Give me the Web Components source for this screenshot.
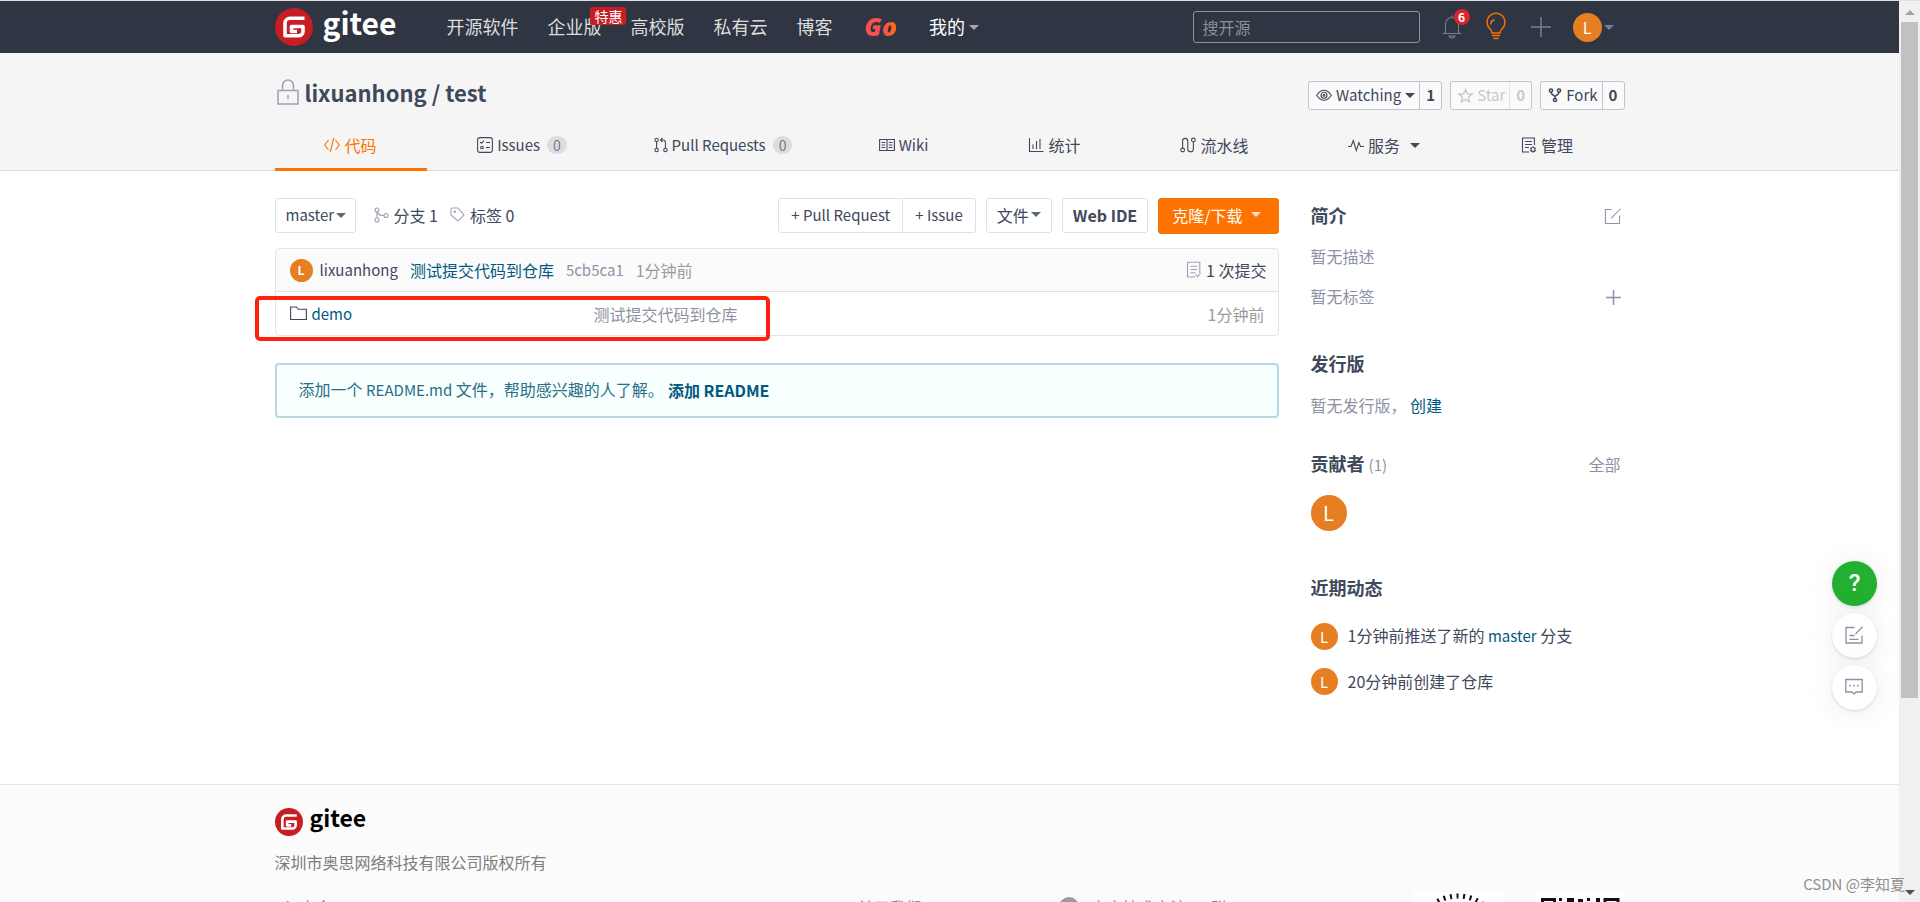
<!DOCTYPE html>
<html lang="zh-CN">
<head>
<meta charset="utf-8">
<title>lixuanhong/test</title>
<style>
html, body { height: 100%; }
body { margin: 0; overflow: hidden; background: #fff; color: #40485b;
  font: 16px/24px "Noto Sans CJK SC", "Noto Sans", sans-serif; }
</style>
</head>
<body>
<gitee-app></gitee-app>
<script>
const define = (name, css, html) => {
  const tpl = document.createElement('template');
  tpl.innerHTML = `<style>*{box-sizing:border-box}:host{box-sizing:border-box}a{color:inherit;text-decoration:none}button,select,input{font:inherit;color:inherit;margin:0;cursor:pointer}h1,h2,p,ul{margin:0;padding:0;list-style:none}.en{font-size:15px}${css}</style>${typeof html === 'string' ? html : ''}`;
  customElements.define(name, class extends HTMLElement {
    constructor() {
      super();
      this.attachShadow({ mode: 'open' }).append(tpl.content.cloneNode(true));
    }
    connectedCallback() {
      if (typeof html === 'function' && !this.ready) {
        this.ready = true;
        this.shadowRoot.append(document.createRange().createContextualFragment(html(this)));
      }
    }
  });
};

const ICONS = {
  lock: ['0 0 22 26', '<path d="M1 11.500h20v13.500H1zM5.500 11.500V6.500a5.500 5.500 0 0 1 11 0v5M11 16v4"/>'],
  code: ['0 0 16 16', '<path d="M4.500 3 .7 8l3.800 5M11.500 3l3.800 5-3.800 5M9.700 1 6.300 15"/>'],
  issues: ['0 0 16 16', '<rect x=".6" y=".6" width="14.800" height="14.800" rx="2.500"/><path d="M3.200 5l1.400 1.300L7 3.600M9 5.500h4M9 10.500h4"/><circle cx="5" cy="10.500" r="1.300"/>'],
  pr: ['0 0 14 16', '<circle cx="2.600" cy="3" r="1.700"/><circle cx="2.600" cy="13" r="1.700"/><circle cx="11.400" cy="13" r="1.700"/><path d="M2.600 4.700v6.600M11.400 11.300V5.500q0-2.500-2.400-2.500H6.500M8.500 1l-2 2 2 2"/>'],
  wiki: ['0 0 16 16', '<path d="M.6 2.500h14.800v11H.6zM8 2.500v11M2.500 5.500h3.700M2.500 8h3.700M2.500 10.500h3.700M9.800 5.500h3.700M9.800 8h3.700M9.800 10.500h3.700"/>'],
  chart: ['0 0 16 16', '<path d="M1.500 1v13.500H15.500M5 12V7.500M8.500 12V4M12 12V2"/>'],
  pipe: ['0 0 16 16', '<circle cx="2.600" cy="13" r="1.900"/><circle cx="13.400" cy="3" r="1.900"/><path d="M2.600 11V4a2.600 2.600 0 0 1 5.200 0v8a2.800 2.800 0 0 0 5.600 0V5"/>'],
  pulse: ['0 0 16 16', '<path d="M0 9.500h3l2.300-6 3 10 2.600-8 1.600 4H16"/>'],
  manage: ['0 0 16 16', '<path d="M13.400 8V1H1.500v14H8M4 4.500h7M4 7.500h7M4 10.500h4"/><circle cx="12" cy="12.500" r="2"/><path d="M12 9.300v1.200M12 14.500v1.200M9.200 10.900l1 .6M13.800 13.500l1 .6M14.800 10.900l-1 .6M10.200 13.500l-1 .6"/>'],
  eye: ['0 0 16 16', '<path d="M.7 8.200q3.300-5 7.300-5t7.300 5q-3.300 5-7.300 5T.7 8.200z"/><circle cx="8" cy="8.200" r="3"/><circle cx="8" cy="8.200" r="1"/>'],
  star: ['0 0 16 16', '<path d="M8 1.500l2 4.600 5 .4-3.800 3.300 1.200 4.900L8 12.100l-4.400 2.600 1.200-4.900L1 6.500l5-.4z"/>'],
  fork: ['0 0 14 16', '<circle cx="3" cy="3.500" r="1.600"/><circle cx="11" cy="3.500" r="1.600"/><circle cx="7" cy="13" r="1.600"/><path d="M3 5.100q0 1.900 2 2.900l2 1.400 2-1.400q2-1 2-2.900M7 9.400v2"/>'],
  branch: ['0 0 16 16', '<circle cx="4" cy="3" r="2"/><circle cx="4" cy="13" r="2"/><circle cx="13" cy="8.500" r="2"/><path d="M4 5v6M4 5q1 3.500 7 3.500"/>'],
  tag: ['0 0 16 16', '<path d="M1 2l1-1h6.500L15 8.500 8.500 15 1 8.500z"/><circle cx="5" cy="5" r=".8"/>'],
  commits: ['0 0 16 18', '<path d="M9 16H1.500V1.200h12.300V12M4.500 5.200h6.500M4.500 8.500h6.500M4.500 11.800h5M9.500 13.500l2 2.300 3-3.800"/>'],
  folder: ['0 0 17 15', '<path d="M.6 13.500V1H6.500l1.600 2.200h8.300v10.300z"/>'],
  edit: ['0 0 18 18', '<path d="M8 1.500H1.500v15H16.500V8M17.500.8 7.500 11"/>'],
  plus: ['0 0 20 20', '<path d="M10 0v20M0 10h20"/>'],
  bell: ['0 0 20 24', '<path d="M.5 18.500h19M3.500 18.500V9a6.500 6.500 0 0 1 13 0v9.500M10 2.500V.5M7 21h6q-1 2-3 2t-3-2z"/>'],
  bulb: ['0 0 20 25', '<path d="M6 18q0-2.500-2.600-4.700a9 9 0 1 1 13.200 0Q14 15.500 14 18zM6 20.500h8M7.500 23.500h5M4.700 9.500a5 5 0 0 1 3.800-4.700"/>'],
  survey: ['0 0 18 18', '<path d="M9.500 1.500H1v15.500h16V9.500M17.500.8 10.500 8M4.500 9.500h5M4.500 13.300h9"/>'],
  chat: ['0 0 18 18', '<path d="M.8 1.500h16.400v12.500H11l-2 2-2-2H.8z"/><path d="M4.200 7.700h1.600M8.200 7.700h1.600M12.200 7.700h1.600" stroke-width="1.700"/>'],
};
define('g-icon', ':host{display:inline-flex;flex:none}svg{display:block;overflow:visible}',
  el => {
    const [box, body] = ICONS[el.getAttribute('name')];
    const [, , w, h] = box.split(' ').map(Number);
    const width = +(el.getAttribute('size') || w);
    return `<svg width="${width}" height="${Math.round(width * h / w)}" viewBox="${box}" fill="none" stroke="currentColor" stroke-width="${el.getAttribute('stroke') || 1.1}" aria-hidden="true">${body}</svg>`;
  });

define('g-caret', ':host{display:inline-block;flex:none;width:0;height:0;border:5px solid transparent;border-bottom:0;border-top-color:currentColor}', '');

define('user-avatar', `:host{display:inline-flex;flex:none;align-items:center;justify-content:center;width:var(--d,28px);height:var(--d,28px);
  border-radius:50%;background:#e67e22;color:#fff;font-size:var(--f,14px);line-height:1}`, '<slot></slot>');

define('gitee-logo', `:host{display:block}a{display:flex;align-items:center;gap:var(--gap,10px);color:inherit}
  svg{display:block;width:var(--d,38px);height:var(--d,38px)}
  span{font-weight:700;font-size:var(--f,30px);line-height:calc(var(--d,38px) - 10px);padding-bottom:10px}`,
  `<a href="#"><svg viewBox="0 0 38 38" aria-hidden="true"><circle cx="19" cy="19" r="19" fill="#c71d23"/>
  <path d="M29.500 10.200H15a5 5 0 0 0-5 5v12.600H23.500a4.500 4.500 0 0 0 4.500-4.500v-4.800H16.500v5H22" fill="none" stroke="#fff" stroke-width="3.600" stroke-linejoin="round"/></svg><span>gitee</span></a>`);

define('site-header', `:host{display:block;background:#2f3542;color:#dcdcdc;border-top:1px solid #dcdfe3}
  .bar{display:flex;align-items:center;height:52px;max-width:1350px;margin:0 auto}
  gitee-logo{color:#fff}
  nav{display:flex;align-items:center;gap:29px;margin-left:50px;padding-bottom:3px;font-size:18px;line-height:26px}
  .ent{position:relative}
  .hot{position:absolute;left:43px;top:-6px;width:36px;height:18px;border-radius:2px;background:#c71d23;color:#fff;font-size:14px;line-height:18px;text-align:center}
  .go{margin:0 1px 0 3px;padding:0 2px 0 0;font:italic 800 25px/26px "Open Sans",sans-serif;background:linear-gradient(90deg,#f6504f 60%,#ff6a13 85%);-webkit-background-clip:text;background-clip:text;color:transparent}
  .me{display:flex;align-items:center;gap:4px;color:#fff}.me g-caret{color:#a4a8ae;margin-top:4px}
  input{width:227px;height:32px;margin-left:auto;padding:0 9px;border:1px solid #8f939b;border-radius:3px;background:transparent;outline:0;cursor:text}
  input::placeholder{color:#8c9099;opacity:1}
  .tools{display:flex;align-items:center;margin-left:22px;margin-right:11px;color:#74809a}
  .tools button{display:flex;align-items:center;position:relative;padding:0;border:0;background:none}
  .n{position:absolute;left:12px;top:-6px;width:16px;height:16px;border-radius:50%;background:#d9262c;color:#fff;font-size:12px;font-weight:700;line-height:16px;text-align:center}
  .bulb{margin-left:24px;color:#fe7300}.plus{margin-left:25px}.user{margin-left:22px;gap:2px}`,
  `<header class="bar"><gitee-logo></gitee-logo>
  <nav><a href="#">开源软件</a><a href="#" class="ent">企业版<span class="hot">特惠</span></a><a href="#">高校版</a><a href="#">私有云</a><a href="#">博客</a><a href="#" class="go">Go</a><a href="#" class="me">我的<g-caret></g-caret></a></nav>
  <input type="search" placeholder="搜开源" aria-label="搜开源">
  <div class="tools"><button aria-label="通知"><g-icon name="bell"></g-icon><span class="n">6</span></button>
  <button class="bulb" aria-label="提示"><g-icon name="bulb" stroke="1.500"></g-icon></button>
  <button class="plus" aria-label="新建"><g-icon name="plus" stroke="1.500"></g-icon></button>
  <button class="user" aria-label="账户"><user-avatar style="--d:29px;--f:16px">L</user-avatar><g-caret></g-caret></button></div></header>`);

define('count-button', `:host{display:flex;height:29px;border:1px solid #c0c4cc;border-radius:3px;background:#fafafa;color:#40485b;font-size:15px}
  :host([muted]){color:#c9c9c9}
  button,a{display:flex;align-items:center;padding:0 4px 0 7px;gap:4px;border:0;background:none;line-height:26px}
  a{width:22px;padding:0;justify-content:center;border-left:1px solid #c0c4cc;font-weight:700}
  :host([muted]) a{border-color:#e3e3e3}`,
  '<button><slot></slot></button><a href="#"><slot name="count"></slot></a>');

define('repo-tab', `:host{display:block}
  a{display:flex;align-items:center;justify-content:center;gap:4px;height:100%;padding-bottom:8px}
  :host([active]) a{color:#fe7300;border-bottom:3px solid #fe7300;padding-bottom:5px}`, '<a href="#"><slot></slot></a>');

define('repo-header', `:host{display:block;background:#f5f5f5;border-bottom:1px solid #dcdddf}
  .in{max-width:1350px;margin:0 auto}
  .top{display:flex;align-items:center;justify-content:space-between;height:74px;padding-top:4px}
  h1{display:flex;align-items:center;gap:6px;padding-left:2px;font-size:22px;line-height:30px}
  h1 g-icon{color:#9aa3b5}
  .acts{display:flex;gap:8px;padding-top:6px}
  nav{display:grid;grid-template-columns:152fr 191fr 211fr 150fr 152fr 168fr 171fr 155fr;height:44px;margin-bottom:-1px}
  .num{margin-left:3px;padding:0 6px;border-radius:9px;background:#dcddde;color:#6c7a96;font-size:14px;line-height:18px}
  nav g-caret{margin-left:6px}`,
  `<div class="in"><div class="top"><h1><g-icon name="lock" stroke="1.500"></g-icon><a href="#">lixuanhong / test</a></h1>
  <div class="acts">
  <count-button><g-icon name="eye"></g-icon>Watching<g-caret></g-caret><span slot="count">1</span></count-button>
  <count-button muted><g-icon name="star" size="15" stroke="1.500"></g-icon>Star<span slot="count">0</span></count-button>
  <count-button><g-icon name="fork" stroke="1.500"></g-icon>Fork<span slot="count">0</span></count-button></div></div>
  <nav><repo-tab active><g-icon name="code"></g-icon>代码</repo-tab>
  <repo-tab class="en"><g-icon name="issues"></g-icon>Issues<span class="num">0</span></repo-tab>
  <repo-tab class="en"><g-icon name="pr"></g-icon>Pull Requests<span class="num">0</span></repo-tab>
  <repo-tab class="en"><g-icon name="wiki"></g-icon>Wiki</repo-tab>
  <repo-tab><g-icon name="chart"></g-icon>统计</repo-tab>
  <repo-tab><g-icon name="pipe"></g-icon>流水线</repo-tab>
  <repo-tab><g-icon name="pulse"></g-icon>服务<g-caret></g-caret></repo-tab>
  <repo-tab><g-icon name="manage"></g-icon>管理</repo-tab></nav></div>`);

define('repo-toolbar', `:host{display:flex;align-items:flex-start;height:36px}
  button,.sel{display:flex;align-items:center;height:35px;border:1px solid #dce3e8;border-radius:3px;background:#fff;padding:0 10px 2px;gap:4px}
  .sel{position:relative;padding:0}
  .sel g-caret{position:absolute;right:9px;pointer-events:none}
  select{appearance:none;height:33px;width:79px;padding:0 0 2px 10px;border:0;background:none;outline:0}
  g-caret{color:#5f6778}
  .link{display:flex;align-items:center;gap:5px;height:33px}.link g-icon{color:#9aa3b5}
  .right{display:flex;margin-left:auto;gap:10px}
  .group{display:flex}.group button{padding:0 12px 2px}
  .group button:first-child{border-radius:3px 0 0 3px}.group button:last-child{border-radius:0 3px 3px 0;border-left:0}
  .go{height:36px;background:#fe7300;border-color:#fe7300;color:#fff;padding:0 17px 3px 13px;gap:8px}.go g-caret{color:#ffe0c8}`,
  `<label class="sel"><select class="en" aria-label="分支"><option>master</option></select><g-caret></g-caret></label>
  <a href="#" class="link" style="margin-left:17px"><g-icon name="branch"></g-icon>分支 1</a>
  <a href="#" class="link" style="margin-left:12px"><g-icon name="tag" size="15"></g-icon>标签 0</a>
  <div class="right"><div class="group"><button class="en">+ Pull Request</button><button class="en">+ Issue</button></div>
  <button style="gap:2px">文件<g-caret></g-caret></button>
  <button><b>Web IDE</b></button>
  <button class="go">克隆/下载<g-caret></g-caret></button></div>`);

define('file-list', `:host{display:block;position:relative;border:1px solid #e1e6ea;border-radius:4px}
  .commit{display:flex;align-items:center;height:43px;padding:0 11px 0 14px;background:#fbfbfb;border-bottom:1px solid #dce3e8;border-radius:4px 4px 0 0}
  .b{color:#005980}.g{color:#8c92a4}
  .t{color:#9b9b9b}
  .count{display:flex;align-items:center;gap:4px;margin-left:auto}.count g-icon{color:#9aa3b5}
  table{width:100%;border-collapse:collapse;table-layout:fixed}
  td{height:43px;padding:0}
  td:first-child{width:318px;padding-left:14px}
  td:last-child{width:120px;text-align:right;padding-right:13px}
  .name{display:flex;align-items:center;gap:5px;color:#005980}.name g-icon{color:#40485b}
  .mark{position:absolute;left:-21px;top:47px;width:515px;height:45px;border:4px solid #ff2010;border-radius:5px;pointer-events:none}`,
  `<div class="commit"><user-avatar style="--d:23px;--f:12px;font-weight:700">L</user-avatar><a href="#" class="en" style="margin-left:7px">lixuanhong</a>
  <a href="#" class="b" style="margin-left:12px">测试提交代码到仓库</a><a href="#" class="g en" style="margin-left:12px">5cb5ca1</a><span class="t" style="margin-left:12px">1分钟前</span>
  <a href="#" class="count"><g-icon name="commits"></g-icon>1 次提交</a></div>
  <table><tbody><tr><td><a href="#" class="name en"><g-icon name="folder"></g-icon>demo</a></td><td class="g">测试提交代码到仓库</td><td class="t">1分钟前</td></tr></tbody></table>
  <div class="mark"></div>`);

define('readme-tip', `:host{display:flex;align-items:center;gap:4px;height:55px;padding:0 22px 2px;border:2px solid #b3dade;border-radius:4px;background:#f8ffff;color:#276f86}
  a{color:#005980;font-weight:700}`, '<span>添加一个 <span class="en">README.md</span> 文件，帮助感兴趣的人了解。</span><a href="#">添加 README</a>');

define('side-section', `:host{display:block}
  header{display:flex;align-items:center;justify-content:space-between;color:#8c92a4}
  h2{font-size:18px;line-height:26px;color:#40485b}`,
  '<header><h2><slot name="title"></slot></h2><slot name="action"></slot></header><slot></slot>');

define('repo-side', `:host{display:block;color:#8c92a4}
  .row{display:flex;align-items:center;justify-content:space-between}
  .ic{display:flex;padding-top:2px}
  .b{color:#005980}small{font-size:15px;font-weight:400;color:#8c92a4}
  li{display:flex;align-items:center;gap:10px;height:45px;color:#40485b}
  li>span{padding-bottom:2px}`,
  `<side-section><span slot="title">简介</span><a href="#" slot="action" class="ic" aria-label="编辑"><g-icon name="edit" size="17"></g-icon></a>
    <p style="margin-top:16px">暂无描述</p><div class="row" style="margin-top:16px"><span>暂无标签</span><a href="#" class="ic" aria-label="添加标签"><g-icon name="plus" size="15" stroke="2"></g-icon></a></div></side-section>
  <side-section style="margin-top:42px"><span slot="title">发行版</span><p style="margin-top:17px">暂无发行版， <a href="#" class="b">创建</a></p></side-section>
  <side-section style="margin-top:33px"><span slot="title">贡献者 <small>(1)</small></span><a href="#" slot="action">全部</a>
    <a href="#" style="display:flex;margin-top:17px"><user-avatar style="--d:36px;--f:20px">L</user-avatar></a></side-section>
  <side-section style="margin-top:43px"><span slot="title">近期动态</span>
    <ul style="margin-top:14px"><li><user-avatar style="--d:27px;--f:15px">L</user-avatar><span>1分钟前推送了新的 <a href="#" class="b en">master</a> 分支</span></li>
    <li><user-avatar style="--d:27px;--f:15px">L</user-avatar><span>20分钟前创建了仓库</span></li></ul></side-section>`);

define('site-footer', `:host{display:block;background:#fbfbfb;border-top:1px solid #e1e6ea;color:#7d7d7d}
  .in{max-width:1350px;margin:0 auto;padding-top:23px}
  gitee-logo{color:#000;--d:28px;--f:23px;--gap:7px}
  p{margin-top:14px}
  .cols{display:grid;grid-template-columns:583fr 206fr 349fr auto;align-items:start;margin-top:18px;color:#8c8c8c}
  .cols>*{margin-top:3px}
  .qq{display:flex;align-items:center;gap:12px;margin-left:-5px}
  .dot{flex:none;width:20px;height:20px;border-radius:50%;background:#9b9b9b}
  .cols>.codes{display:flex;gap:32px;margin-top:0}
  .codes svg{display:block;background:#fff}`,
  `<footer class="in"><gitee-logo></gitee-logo><p>深圳市奥思网络科技有限公司版权所有</p>
  <div class="cols"><a href="#">Git 大全</a><a href="#">关于我们</a><span class="qq"><i class="dot"></i>官方技术交流QQ群</span>
  <div class="codes"><svg width="90" height="90" viewBox="0 0 90 90" aria-hidden="true"><circle cx="45" cy="45" r="41" fill="none" stroke="#111" stroke-width="5" stroke-dasharray="2 4.600"/></svg>
  <svg width="90" height="90" viewBox="0 0 90 90" aria-hidden="true"><path d="M7.500 25V7.500h12V25M70 25V7.500h13V25" fill="none" stroke="#111" stroke-width="3"/><path d="M24 6h3v3h-3zM32 6h7v4h-7zM43 7h5v3h-5zM52 6h3v3h-3zM61 6h4v4h-4z" fill="#111"/></svg></div></div></footer>`);

define('float-tools', `:host{position:absolute;right:22px;top:561px;display:grid;gap:7px;justify-items:center}
  button{display:flex;align-items:center;justify-content:center;width:45px;height:45px;padding:0 1px 2px 0;border:0;border-radius:50%;background:#fff;color:#8c92a4;box-shadow:0 1px 3px #0002,0 2px 30px #00000014}
  .q{background:#23b030;color:#fff;font:500 24px/45px Roboto,sans-serif;padding:0}`,
  `<button class="q">?</button><button aria-label="问卷"><g-icon name="survey" stroke="1.300"></g-icon></button><button aria-label="反馈"><g-icon name="chat" stroke="1.300"></g-icon></button>`);

define('page-scroll', `:host{display:flex;flex-direction:column;padding:0 2px;background:#f0f0f0;border-top:1px solid #dcdfe3;position:relative}
  i{align-self:center;border:5px solid transparent;height:0}
  .up{border-top:0;border-bottom-color:#a3a3a3;margin:9px 0 7px}
  .thumb{width:17px;height:75%;background:#c1c1c1}
  .down{border-bottom:0;border-top-color:#505050;margin:auto 0 7px}`,
  '<i class="up"></i><div class="thumb"></div><i class="down"></i>');

define('gitee-app', `:host{display:grid;grid-template-columns:minmax(0,1fr) 21px;grid-template-rows:minmax(0,1fr);height:100vh;overflow:hidden;position:relative}
  .page{position:relative;overflow:hidden}
  main{display:grid;grid-template-columns:minmax(0,1fr) 310px;column-gap:32px;max-width:1350px;margin:0 auto;padding:27px 4px 80px 0;align-items:start}
  file-list{margin-top:14px}readme-tip{margin-top:27px}
  repo-side{padding-top:4px}
  .credit{position:absolute;right:15px;bottom:7px;color:#8f8f8f;font-size:15px;line-height:22px}`,
  `<div class="page"><site-header></site-header><repo-header></repo-header>
  <main><section><repo-toolbar></repo-toolbar><file-list></file-list><readme-tip></readme-tip></section><repo-side></repo-side></main>
  <site-footer></site-footer><float-tools></float-tools></div><page-scroll></page-scroll><span class="credit">CSDN @李知夏</span>`);
</script>
</body>
</html>
